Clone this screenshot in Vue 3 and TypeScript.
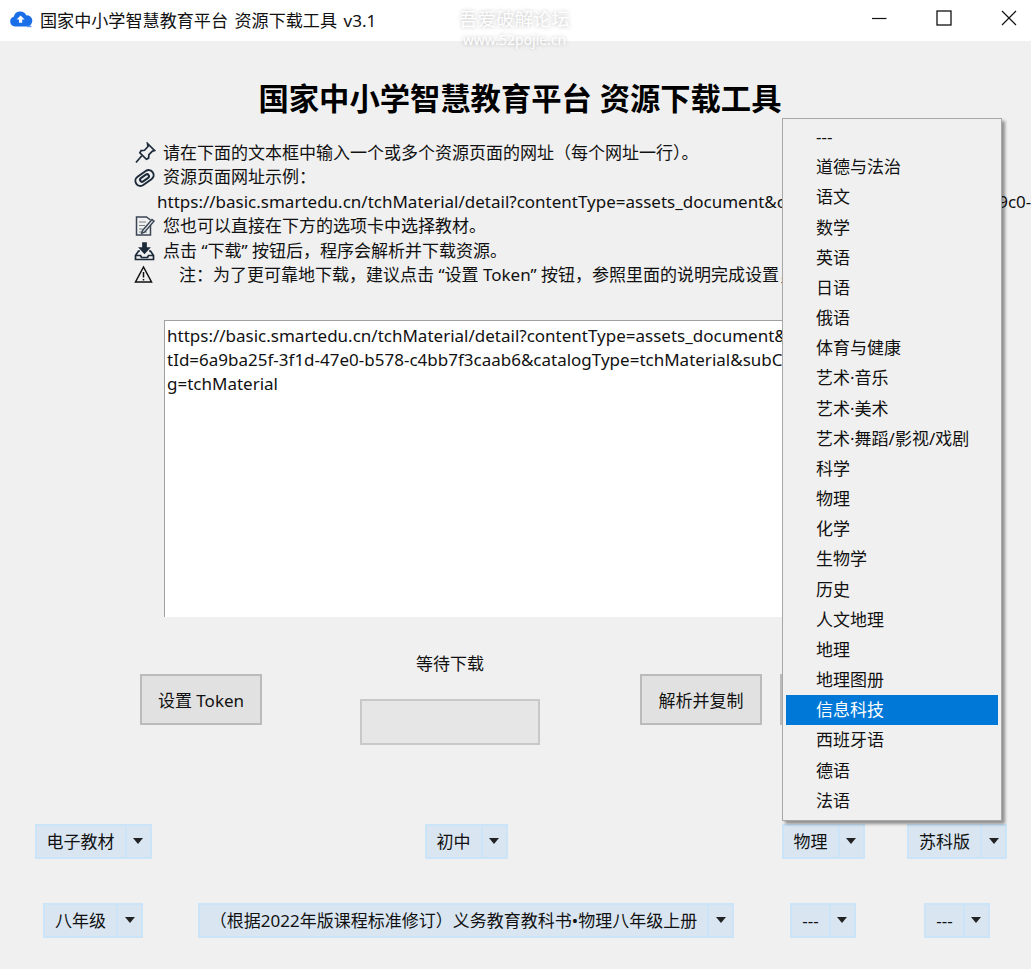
<script setup lang="ts">
interface Combo {
  label: string
}

const subjects = [
  '---', '道德与法治', '语文', '数学', '英语', '日语', '俄语', '体育与健康', '艺术·音乐', '艺术·美术',
  '艺术·舞蹈/影视/戏剧', '科学', '物理', '化学', '生物学', '历史', '人文地理', '地理', '地理图册',
  '信息科技', '西班牙语', '德语', '法语',
]

const selected = '信息科技'

const combos: Combo[] = [
  { label: '电子教材' },
  { label: '初中' },
  { label: '物理' },
  { label: '苏科版' },
  { label: '八年级' },
  { label: '（根据2022年版课程标准修订）义务教育教科书•物理八年级上册' },
  { label: '---' },
  { label: '---' },
]
</script>

<template>
  <div class="window">
    <header class="titlebar">
      <svg class="app-icon" width="24" height="20" viewBox="0 0 24 20">
        <path d="M6 17.5a5 5 0 0 1-1.2-9.8 6.6 6.6 0 0 1 12.4-1.5 5.6 5.6 0 0 1 1 11.3z" fill="#1a6fe8" />
        <path d="M11.6 6.5l4 4h-2.4v3.2H10v-3.2H7.6z" fill="#fff" />
        <path d="M18 17.5h4.5" stroke="#5b97ee" stroke-width="1.4" />
      </svg>
      <span class="app-title">国家中小学智慧教育平台 资源下载工具 v3.1</span>
      <div class="win-controls">
        <svg width="16" height="16" viewBox="0 0 16 16"><path d="M1 8.5h14.5" stroke="#111" stroke-width="1.2" /></svg>
        <svg width="16" height="16" viewBox="0 0 16 16"><rect x="1" y="1" width="14" height="14" fill="none" stroke="#111" stroke-width="1.3" /></svg>
        <svg width="16" height="16" viewBox="0 0 16 16"><path d="M1 1l14 14M15 1L1 15" stroke="#111" stroke-width="1.2" /></svg>
      </div>
    </header>

    <div class="watermark">
      <div>吾爱破解论坛</div>
      <div class="wm-url">www.52pojie.cn</div>
    </div>

    <main class="body">
      <h1 class="heading">国家中小学智慧教育平台 资源下载工具</h1>

      <div class="notes">
        <div class="note">
          <svg class="note-icon" width="22" height="22" viewBox="0 0 22 22" fill="none" stroke="#1c2a3a" stroke-width="1.7">
            <path d="M13.5 1.5l7 7-2 .6-3.6 3.6-.3 3.4-2.2 1.2-6.5-6.5 1.2-2.2 3.4-.3L14 4.5z" />
            <path d="M7.8 13.8L2 20.5" />
          </svg>
          <span>请在下面的文本框中输入一个或多个资源页面的网址（每个网址一行）。</span>
        </div>
        <div class="note">
          <svg class="note-icon" width="22" height="22" viewBox="0 0 22 22" fill="none" stroke="#1c2a3a" stroke-width="2">
            <rect x="0.5" y="6" width="20" height="10" rx="5" transform="rotate(-35 10.5 11)" />
            <rect x="5.5" y="9" width="10" height="4" rx="2" transform="rotate(-35 10.5 11)" />
          </svg>
          <span>资源页面网址示例：</span>
        </div>
        <div class="note url-line">https://basic.smartedu.cn/tchMaterial/detail?contentType=assets_document&amp;contentId=b8e9a3fe-dae7-49c0-86cb-d146f883fd8e</div>
        <div class="note">
          <svg class="note-icon" width="22" height="22" viewBox="0 0 22 22" fill="none" stroke="#3a4654" stroke-width="1.5">
            <path d="M16.5 9v11H2.5V2h10l4 3" />
            <path d="M5 7h7M5 10.5h6M5 14h3.5M5 17h8" stroke-width="1.1" stroke="#77808a" />
            <path d="M8.5 15.5l9.5-11 2 1.7-9.5 11-2.8 1z" fill="#e8e8e8" />
          </svg>
          <span>您也可以直接在下方的选项卡中选择教材。</span>
        </div>
        <div class="note">
          <svg class="note-icon" width="22" height="22" viewBox="0 0 22 22" fill="none" stroke="#1c2a3a" stroke-width="1.7">
            <path d="M9 3h3v5h3l-4.5 5L6 8h3z" fill="#1c2a3a" />
            <path d="M6 11H4.5L1.5 15.5v4h18v-4L16.5 11H15" />
            <path d="M1.5 15.5h5l1 2h6l1-2h5" />
          </svg>
          <span>点击 “下载” 按钮后，程序会解析并下载资源。</span>
        </div>
        <div class="note">
          <svg class="note-icon" width="22" height="22" viewBox="0 0 22 22" fill="none" stroke="#111" stroke-width="1.5">
            <path d="M9.5 3L1.5 18h16z" />
            <path d="M9.5 8v5.5M9.5 15v1.6" />
          </svg>
          <span class="warn-text">注：为了更可靠地下载，建议点击 “设置 Token” 按钮，参照里面的说明完成设置，以解除下载限制。</span>
        </div>
      </div>

      <div class="url-box">
        <div>https://basic.smartedu.cn/tchMaterial/detail?contentType=assets_document&amp;conten</div>
        <div>tId=6a9ba25f-3f1d-47e0-b578-c4bb7f3caab6&amp;catalogType=tchMaterial&amp;subCatalo</div>
        <div>g=tchMaterial</div>
      </div>

      <div class="actions">
        <button class="btn">设置 Token</button>
        <div class="status">
          <div class="status-label">等待下载</div>
          <div class="progress"></div>
        </div>
        <div class="btn-pair">
          <button class="btn">解析并复制</button>
          <button class="btn">下载</button>
        </div>
      </div>

      <div class="combos">
        <div v-for="(c, i) in combos" :key="i" class="combo-cell">
          <div class="combo">
            <span class="combo-text">{{ c.label }}</span>
            <span class="combo-arrow"><i class="caret"></i></span>
          </div>
        </div>
      </div>
    </main>

    <ul class="menu">
      <li v-for="s in subjects" :key="s" class="menu-item" :class="{ active: s === selected }">{{ s }}</li>
    </ul>
  </div>
</template>

<style scoped>
.window {
  position: relative;
  width: 1031px;
  height: 969px;
  overflow: hidden;
  background: #f0f0f0;
  color: #111;
  font-family: "Noto Sans", "Noto Sans CJK SC", sans-serif;
  font-size: 17px;
}

.titlebar {
  display: flex;
  align-items: center;
  height: 41px;
  padding-left: 9px;
  background: #fff;
  box-sizing: border-box;
}

.app-icon {
  margin-right: 7px;
  margin-top: -3px;
}

.app-title {
  font-size: 17.1px;
  word-spacing: 2px;
  color: #111;
  white-space: nowrap;
  margin-top: -3px;
}

.win-controls {
  display: flex;
  margin-left: auto;
  margin-right: 14px;
  margin-top: -5px;
  gap: 49px;
}

.watermark {
  position: absolute;
  left: 458px;
  top: 8px;
  width: 113px;
  color: #fff;
  font-size: 18.5px;
  line-height: 22px;
  text-align: center;
  text-shadow: 0 0 4px rgba(0, 0, 0, 0.28);
  white-space: nowrap;
}

.wm-url {
  font-size: 14px;
  line-height: 19px;
}

.body {
  display: flex;
  flex-direction: column;
}

.heading {
  margin: 36px 0 0 9px;
  height: 44px;
  font-size: 30.3px;
  line-height: 44px;
  font-weight: 700;
  text-align: center;
  color: #000;
}

.notes {
  margin: 20px 0 0 134px;
  line-height: 24.4px;
}

.note {
  display: flex;
  align-items: center;
  height: 24.4px;
  white-space: nowrap;
  color: #111;
}

.note-icon {
  flex: none;
  width: 22px;
  margin-right: 7px;
}

.url-line {
  padding-left: 23px;
}

.warn-text {
  margin-left: 16px;
}

.url-box {
  width: 703px;
  height: 297.5px;
  margin: 32.6px 0 0 164px;
  padding: 3px 2px;
  box-sizing: border-box;
  background: #fff;
  border-left: 1px solid #a0a0a0;
  border-top: 1px solid #a0a0a0;
  line-height: 24px;
  white-space: nowrap;
  overflow: hidden;
  color: #111;
}

.actions {
  display: flex;
  align-items: flex-start;
  height: 129px;
  padding: 56.5px 0 0 140px;
  box-sizing: border-box;
}

.btn {
  width: 122px;
  height: 51px;
  background: #e1e1e1;
  border: 2px solid #bbb;
  font: inherit;
  color: #111;
  padding: 0;
}

.status {
  display: flex;
  flex-direction: column;
  align-items: center;
  width: 180px;
  margin: -27px 0 0 98px;
}

.status-label {
  height: 34px;
  line-height: 34px;
  color: #111;
  margin-bottom: 18px;
}

.progress {
  width: 180px;
  height: 46px;
  background: #e6e6e6;
  border: 2px solid #c8c8c8;
  box-sizing: border-box;
}

.btn-pair {
  display: flex;
  gap: 18px;
  margin-left: 100px;
}

.combos {
  display: grid;
  grid-template-columns: 186px 560px 154px 114px;
  row-gap: 44px;
  margin-top: 77.5px;
}

.combo-cell {
  display: flex;
  justify-content: center;
}

.combo {
  display: flex;
  height: 35px;
  background: #d9e6f2;
  border: 2px solid #cce4f7;
  box-sizing: border-box;
  white-space: nowrap;
}

.combo-text {
  padding: 0 10px;
  line-height: 31px;
  color: #111;
  border-right: 2px solid #cce4f7;
}

.combo-arrow {
  display: flex;
  align-items: center;
  justify-content: center;
  width: 23px;
}

.caret {
  width: 0;
  height: 0;
  border-left: 5px solid transparent;
  border-right: 5px solid transparent;
  border-top: 6px solid #222;
}

.menu {
  position: absolute;
  left: 782px;
  top: 118px;
  width: 220px;
  height: 703px;
  margin: 0;
  padding: 3px;
  box-sizing: border-box;
  list-style: none;
  background: #f0f0f0;
  border: 1px solid #a8a8a8;
  box-shadow: 3px 3px 3px rgba(0, 0, 0, 0.4);
}

.menu-item {
  height: 30.18px;
  padding-left: 30px;
  line-height: 30.18px;
  color: #111;
  white-space: nowrap;
}

.menu-item.active {
  background: #0078d7;
  color: #fff;
}
</style>
